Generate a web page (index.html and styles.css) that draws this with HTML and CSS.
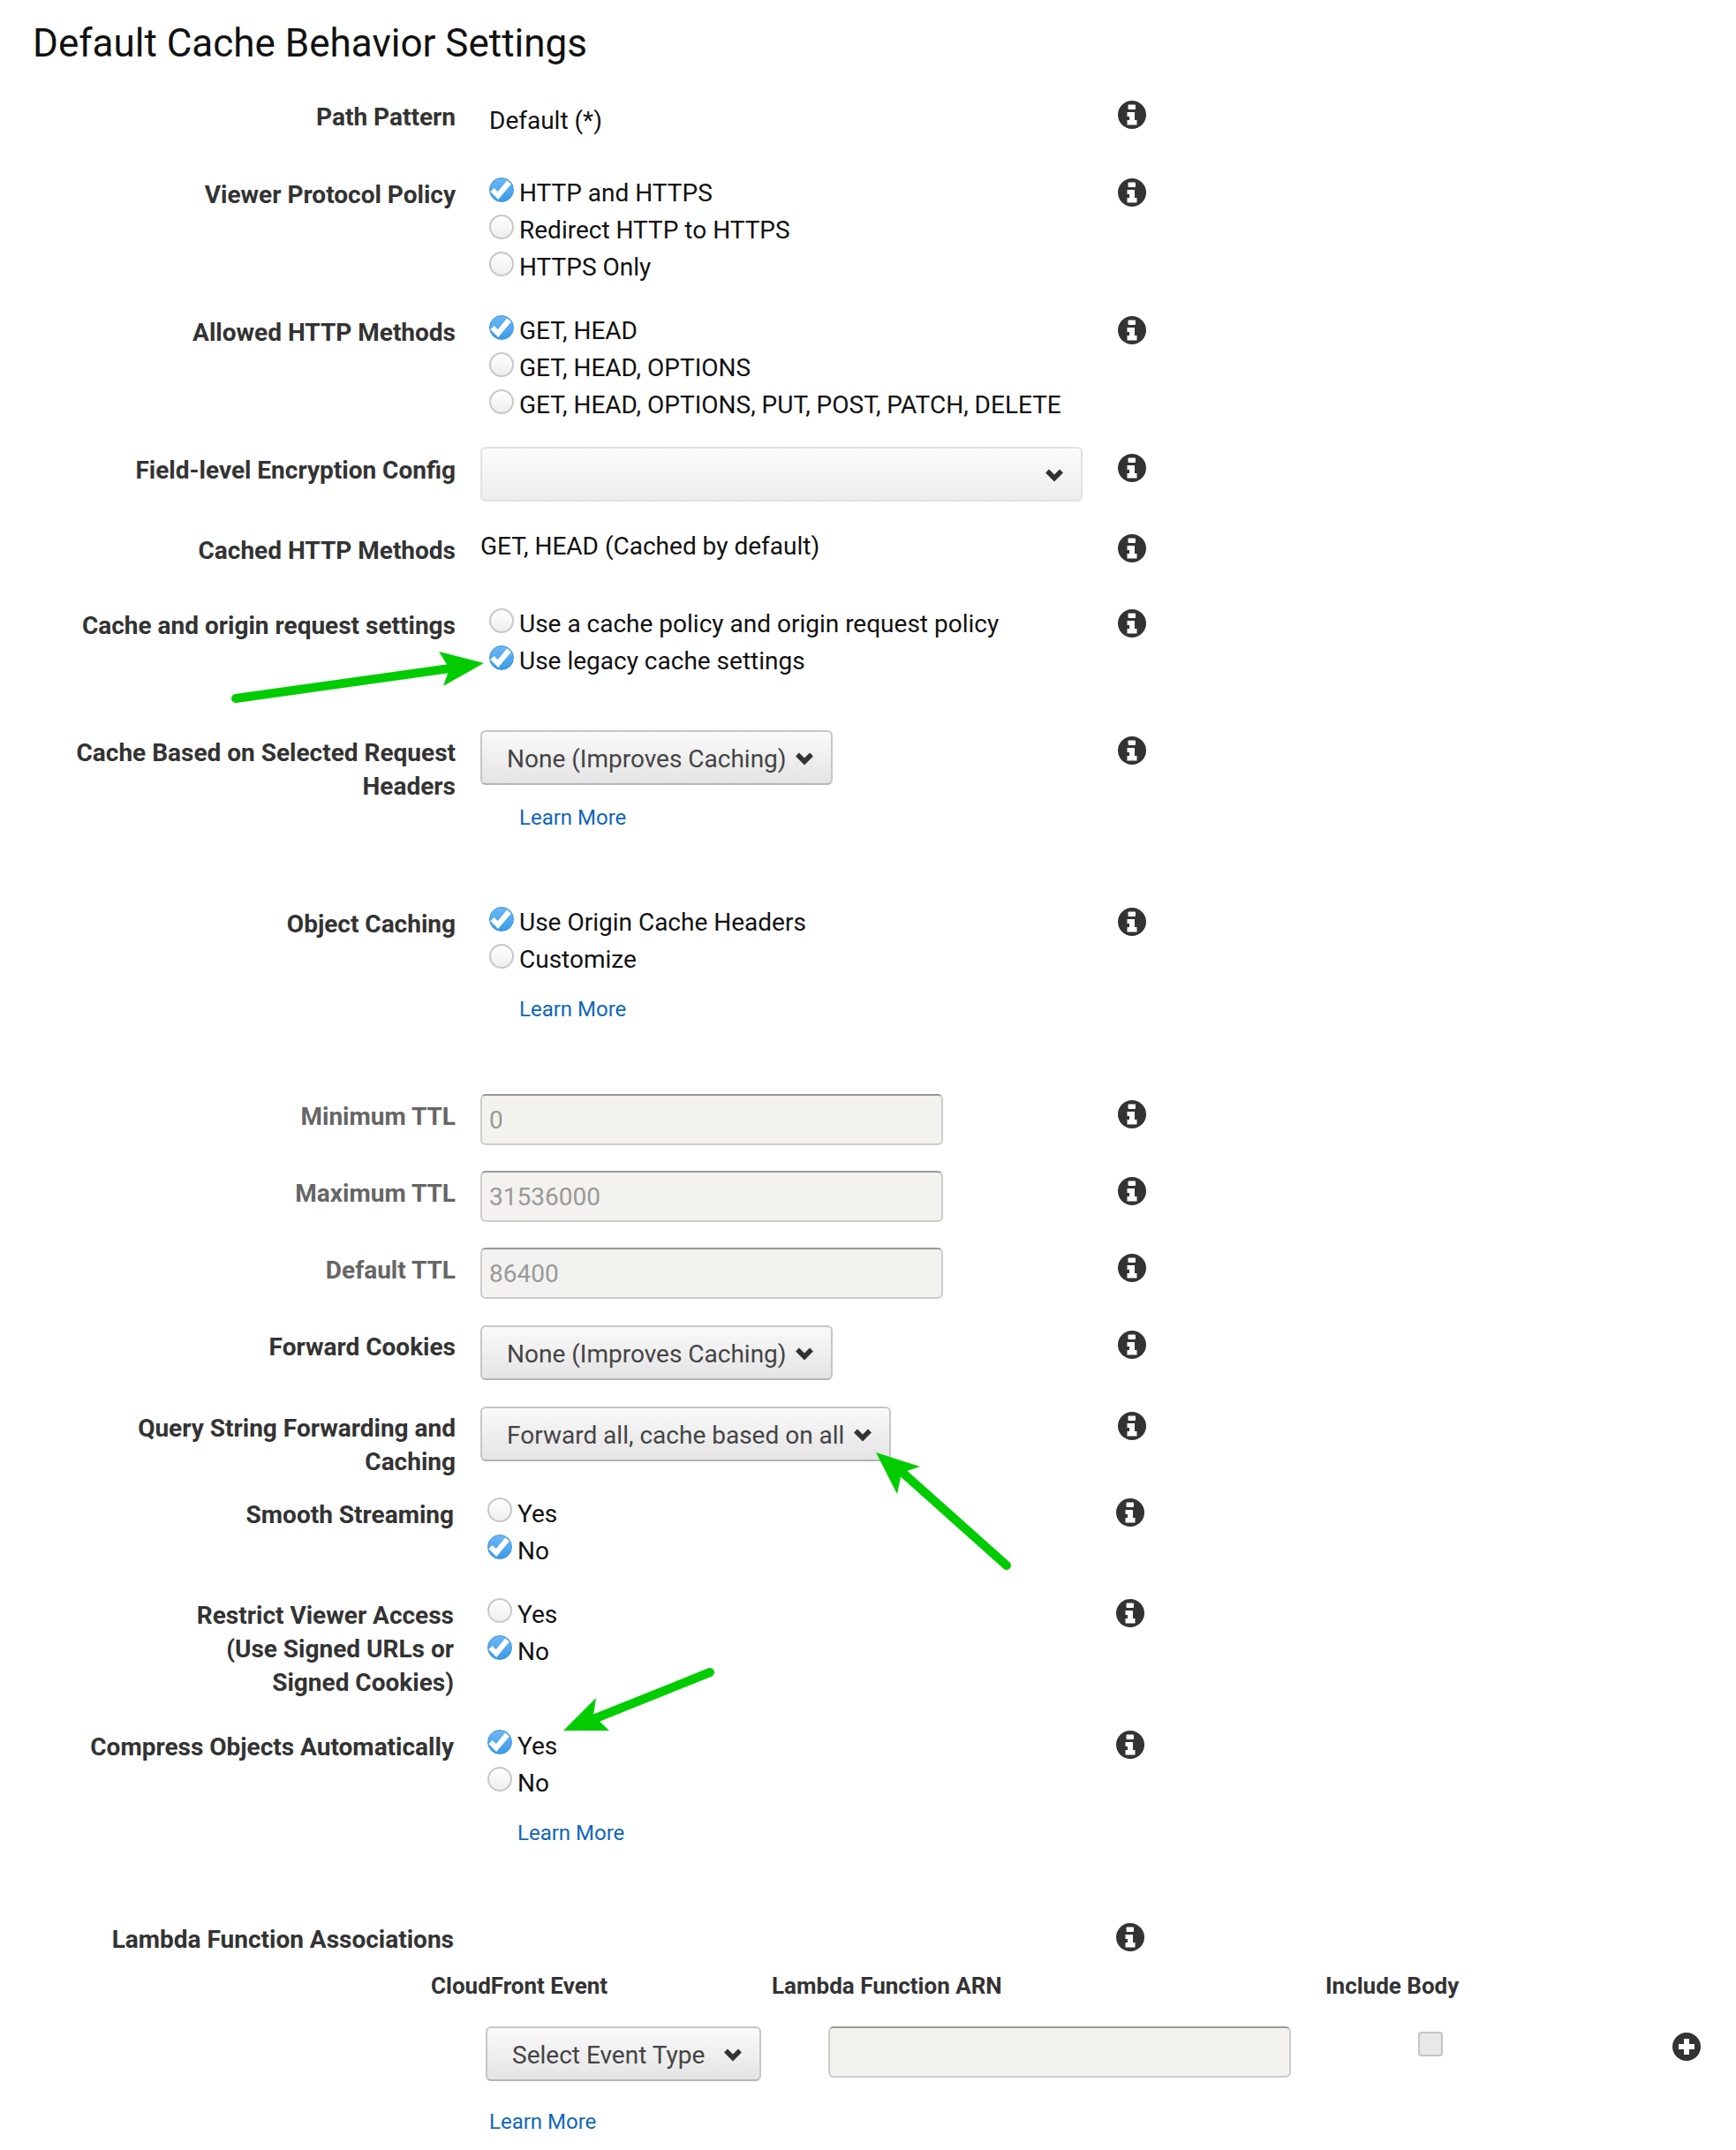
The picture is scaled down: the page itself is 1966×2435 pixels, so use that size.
FILE: index.html
```html
<!DOCTYPE html>
<html lang="en">
  <head>
    <meta charset="UTF-8" />
    <title>Default Cache Behavior Settings</title>
    <link rel="stylesheet" href="styles.css">
  </head>
  <body>
    <svg class="defs" width="0" height="0">
      <symbol id="info" viewBox="0 0 32 32">
        <circle cx="16" cy="16" r="16" fill="#333" />
        <rect x="11.5" y="4.5" width="8.5" height="5.5" rx="1" fill="#fff" />
        <path d="M10.5 13H19V22H21.5V27.5H10.5V22H13V18H10.5Z" fill="#fff" />
      </symbol>
      <symbol id="chevron" viewBox="0 0 22 18">
        <path d="M3 4.5L11 12.5L19 4.5" fill="none" stroke="#333" stroke-width="5.5" />
      </symbol>
      <symbol id="check" viewBox="0 0 28 28">
        <path d="M3.5 15L10 21.5L22.5 6.5" fill="none" stroke="#fff" stroke-width="6" />
      </symbol>
      <symbol id="plus" viewBox="0 0 32 32">
        <circle cx="16" cy="16" r="16" fill="#333" />
        <path d="M16 7V25M7 16H25" fill="none" stroke="#fff" stroke-width="6" />
      </symbol>
    </svg>

    <main class="page">
      <h1>Default Cache Behavior Settings</h1>

      <div class="row h-path">
        <div class="label">Path Pattern</div>
        <div class="plain pushed">Default (*)</div>
        <svg class="info"><use href="#info" /></svg>
      </div>

      <div class="row h-viewer">
        <div class="label">Viewer Protocol Policy</div>
        <div>
          <div class="option"><span class="radio on"><svg><use href="#check" /></svg></span>HTTP and HTTPS</div>
          <div class="option"><span class="radio"></span>Redirect HTTP to HTTPS</div>
          <div class="option"><span class="radio"></span>HTTPS Only</div>
        </div>
        <svg class="info"><use href="#info" /></svg>
      </div>

      <div class="row h-viewer">
        <div class="label">Allowed HTTP Methods</div>
        <div>
          <div class="option"><span class="radio on"><svg><use href="#check" /></svg></span>GET, HEAD</div>
          <div class="option"><span class="radio"></span>GET, HEAD, OPTIONS</div>
          <div class="option"><span class="radio"></span>GET, HEAD, OPTIONS, PUT, POST, PATCH, DELETE</div>
        </div>
        <svg class="info"><use href="#info" /></svg>
      </div>

      <div class="row h-field">
        <div class="label">Field-level Encryption Config</div>
        <div class="select select-blank"><span></span><svg class="chevron"><use href="#chevron" /></svg></div>
        <svg class="info"><use href="#info" /></svg>
      </div>

      <div class="row h-cached">
        <div class="label">Cached HTTP Methods</div>
        <div class="plain raised">GET, HEAD (Cached by default)</div>
        <svg class="info"><use href="#info" /></svg>
      </div>

      <div class="row h-origin">
        <div class="label">Cache and origin request settings</div>
        <div>
          <div class="option"><span class="radio"></span>Use a cache policy and origin request policy</div>
          <div class="option"><span class="radio on"><svg><use href="#check" /></svg></span>Use legacy cache settings</div>
        </div>
        <svg class="info"><use href="#info" /></svg>
      </div>

      <div class="row h-headers">
        <div class="label">Cache Based on Selected Request<br />Headers</div>
        <div class="raised">
          <div class="select select-none"><span>None (Improves Caching)</span><svg class="chevron"><use href="#chevron" /></svg></div>
          <a class="learn learn-select" href="#">Learn More</a>
        </div>
        <svg class="info"><use href="#info" /></svg>
      </div>

      <div class="row h-object">
        <div class="label">Object Caching</div>
        <div>
          <div class="option"><span class="radio on"><svg><use href="#check" /></svg></span>Use Origin Cache Headers</div>
          <div class="option"><span class="radio"></span>Customize</div>
          <a class="learn learn-option" href="#">Learn More</a>
        </div>
        <svg class="info"><use href="#info" /></svg>
      </div>

      <div class="row h-ttl">
        <div class="label label-muted">Minimum TTL</div>
        <input class="field field-ttl raised" value="0" disabled />
        <svg class="info"><use href="#info" /></svg>
      </div>

      <div class="row h-ttl">
        <div class="label label-muted">Maximum TTL</div>
        <input class="field field-ttl raised" value="31536000" disabled />
        <svg class="info"><use href="#info" /></svg>
      </div>

      <div class="row h-ttl">
        <div class="label label-muted">Default TTL</div>
        <input class="field field-ttl raised" value="86400" disabled />
        <svg class="info"><use href="#info" /></svg>
      </div>

      <div class="row h-cookies">
        <div class="label">Forward Cookies</div>
        <div class="select select-none nudged"><span>None (Improves Caching)</span><svg class="chevron"><use href="#chevron" /></svg></div>
        <svg class="info"><use href="#info" /></svg>
      </div>

      <div class="row h-query">
        <div class="label">Query String Forwarding and<br />Caching</div>
        <div class="select select-query nudged"><span>Forward all, cache based on all</span><svg class="chevron"><use href="#chevron" /></svg></div>
        <svg class="info"><use href="#info" /></svg>
      </div>

      <div class="shifted">
        <div class="row h-smooth">
          <div class="label">Smooth Streaming</div>
          <div>
            <div class="option"><span class="radio"></span>Yes</div>
            <div class="option"><span class="radio on"><svg><use href="#check" /></svg></span>No</div>
          </div>
          <svg class="info"><use href="#info" /></svg>
        </div>

        <div class="row h-restrict">
          <div class="label">Restrict Viewer Access<br />(Use Signed URLs or<br />Signed Cookies)</div>
          <div>
            <div class="option"><span class="radio"></span>Yes</div>
            <div class="option"><span class="radio on"><svg><use href="#check" /></svg></span>No</div>
          </div>
          <svg class="info"><use href="#info" /></svg>
        </div>

        <div class="row h-object">
          <div class="label">Compress Objects Automatically</div>
          <div>
            <div class="option"><span class="radio on"><svg><use href="#check" /></svg></span>Yes</div>
            <div class="option"><span class="radio"></span>No</div>
            <a class="learn learn-option" href="#">Learn More</a>
          </div>
          <svg class="info"><use href="#info" /></svg>
        </div>

        <div class="row h-lambda">
          <div class="label">Lambda Function Associations</div>
          <div></div>
          <svg class="info"><use href="#info" /></svg>
        </div>
      </div>

      <div class="assoc-head">
        <div>CloudFront Event</div>
        <div>Lambda Function ARN</div>
        <div>Include Body</div>
      </div>

      <div class="assoc-row">
        <div class="select select-event"><span>Select Event Type</span><svg class="chevron"><use href="#chevron" /></svg></div>
        <input class="field field-arn" disabled />
        <span class="checkbox"></span>
        <svg class="plus"><use href="#plus" /></svg>
      </div>

      <a class="learn learn-assoc" href="#">Learn More</a>

      <!-- arrows drawn on top of the form -->
      <svg class="arrows" width="1966" height="2435">
        <g fill="#00cc00" stroke="#00cc00">
          <path d="M267 791L510 757" stroke-width="10" stroke-linecap="round" />
          <path d="M548 751L497 738L509 757L502 777Z" stroke="none" />
          <path d="M1140 1773L1019 1665" stroke-width="10" stroke-linecap="round" />
          <path d="M992 1645L1042 1661L1021 1668L1016 1692Z" stroke="none" />
          <path d="M804 1894L672 1947" stroke-width="10" stroke-linecap="round" />
          <path d="M638 1960L675 1923L672 1943L690 1960Z" stroke="none" />
        </g>
      </svg>
    </main>
  </body>
</html>
```

FILE: styles.css
```css
* {
  box-sizing: border-box;
}
body {
  margin: 0;
  background-color: #fff;
  color: #111;
  font-family: "Roboto", sans-serif;
  font-size: 28px;
}
.defs {
  position: absolute;
}
.page {
  position: relative;
  width: 1966px;
  height: 2435px;
  overflow: hidden;
}
h1 {
  margin: 19px 0 31px 37px;
  font-size: 44px;
  line-height: 60px;
  font-weight: 400;
  color: #111;
}

/* form rows */
.row {
  display: grid;
  grid-template-columns: 516px 694px 32px;
  column-gap: 28px;
  align-items: start;
}
.h-path { height: 88px; }
.h-viewer { height: 156px; }
.h-field { height: 91px; }
.h-cached { height: 85px; }
.h-origin { height: 144px; }
.h-headers { height: 194px; }
.h-object { height: 218px; }
.h-ttl { height: 87px; }
.h-cookies { height: 92px; }
.h-query { height: 98px; }
.h-smooth { height: 114px; }
.h-restrict { height: 149px; }
.h-lambda { height: 57px; }

.shifted {
  margin-left: -2px;
}
.label {
  padding-top: 4px;
  text-align: right;
  line-height: 38px;
  font-weight: 700;
  color: #333;
  white-space: nowrap;
}
.label-muted {
  color: #666;
}
.plain {
  line-height: 42px;
}
.pushed {
  padding: 6px 0 0 10px;
}
.raised {
  margin-top: -3px;
}
.nudged {
  margin-top: -2px;
}
.info {
  width: 32px;
  height: 32px;
  margin-top: 4px;
}

/* radio options */
.option {
  display: flex;
  align-items: flex-start;
  height: 42px;
  line-height: 42px;
  white-space: nowrap;
}
.shifted .option {
  line-height: 44px;
}
.radio {
  flex: none;
  width: 28px;
  height: 28px;
  margin: 2.5px 6px 0 10px;
  border: 2.5px solid #c8c8c8;
  border-radius: 50%;
  background: linear-gradient(#fff, #eee);
}
.radio.on {
  position: relative;
  border: 1.5px solid #3d93dd;
  background: linear-gradient(#6cb8f5, #3b9be8);
}
.radio.on svg {
  position: absolute;
  top: -1.5px;
  left: -1.5px;
  width: 28px;
  height: 28px;
}

/* dropdowns */
.select {
  display: flex;
  align-items: center;
  justify-content: space-between;
  height: 62px;
  padding: 2px 19px 0 28px;
  border: 2px solid #c6c6c6;
  border-bottom-color: #b4b4b4;
  border-radius: 6px;
  background: linear-gradient(#fafafa, #e4e4e4);
  color: #444;
  white-space: nowrap;
}
.select-blank {
  width: 682px;
  margin-top: -4px;
  border-color: #e2e2e2;
  background: linear-gradient(#fbfbfb, #eee);
}
.select-none { width: 399px; }
.select-query { width: 465px; }
.select-event { width: 312px; }
.chevron {
  flex: none;
  width: 22px;
  height: 18px;
}

/* text inputs */
.field {
  display: block;
  height: 58px;
  padding: 0 0 0 8px;
  border: 2px solid #ccc;
  border-top-color: #999;
  border-radius: 6px;
  background: #f3f2ef;
  color: #999;
  font: inherit;
}
.field-ttl,
.field-arn {
  width: 524px;
}

/* links */
.learn {
  display: block;
  font-size: 24px;
  line-height: 36px;
  color: #1166bb;
  text-decoration: none;
}
.learn-select {
  margin: 19px 0 0 44px;
}
.learn-option {
  margin: 17px 0 0 44px;
}
.shifted .learn-option {
  margin-top: 18px;
}

/* lambda table */
.assoc-head {
  display: grid;
  grid-template-columns: 386px 627px auto;
  padding-left: 488px;
  font-size: 26px;
  line-height: 36px;
  font-weight: 700;
  color: #333;
}
.assoc-row {
  display: grid;
  grid-template-columns: 388px 668px 288px 32px;
  align-items: start;
  margin-top: 28px;
  padding-left: 550px;
}
.checkbox {
  width: 28px;
  height: 28px;
  margin-top: 6px;
  border: 2px solid #c4c4c4;
  border-radius: 4px;
  background: #e8e8e8;
}
.plus {
  width: 32px;
  height: 32px;
  margin-top: 7px;
}
.learn-assoc {
  margin: 28px 0 0 554px;
}

.arrows {
  position: absolute;
  top: 0;
  left: 0;
  pointer-events: none;
}
```
